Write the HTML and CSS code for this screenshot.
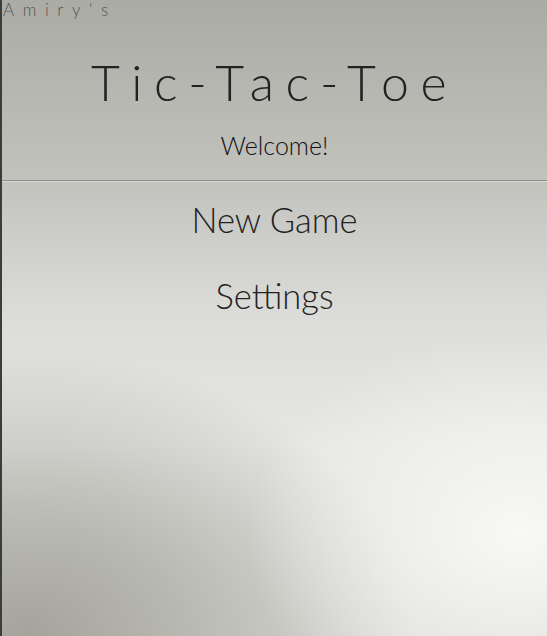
FILE: index.html
```html
<!DOCTYPE html>
<html>
<head>
<meta charset="utf-8">
<link rel="stylesheet" href="styles.css">
</head>
<body>
<div class="page">
  <header class="header">
    <div class="brand">Amiry's</div>
    <h1 class="title">Tic-Tac-Toe</h1>
    <p class="welcome">Welcome!</p>
  </header>
  <nav class="menu">
    <a class="menu-item">New Game</a>
    <a class="menu-item">Settings</a>
  </nav>
</div>
</body>
</html>
```
FILE: styles.css
```css
html, body {
  margin: 0;
  padding: 0;
  height: 100%;
}
body {
  font-family: Lato, "Open Sans", sans-serif;
  color: #222;
  background-color: #d8d8d4;
  background-image:
    radial-gradient(ellipse 50% 32% at 95% 84%, rgba(248,248,247,1) 0%, rgba(248,248,247,0) 100%),
    radial-gradient(ellipse 70% 45% at 5% 100%, rgba(164,164,156,1) 0%, rgba(164,164,156,0.65) 40%, rgba(164,164,156,0) 100%),
    linear-gradient(180deg, #ababa6 0%, #c2c2bd 28%, #dcdcda 50%, #e6e6e4 70%, #dcdcd8 100%);
  border-left: 2px solid #3c3c3c;
  box-sizing: border-box;
  overflow: hidden;
}
.page {
  display: flex;
  flex-direction: column;
  height: 100%;
}
.header {
  height: 180px;
  border-bottom: 1px solid #8e8e8a;
  box-shadow: 0 1px 0 #d8d8d6;
  display: flex;
  flex-direction: column;
  align-items: center;
}
.brand {
  align-self: flex-start;
  font-size: 17px;
  line-height: 20px;
  letter-spacing: 8.6px;
  color: #555;
  font-weight: 300;
  padding-left: 1px;
}
.title {
  margin: 32px 0 0 0;
  font-size: 50px;
  line-height: 60px;
  font-weight: 300;
  letter-spacing: 11.5px;
  color: #222;
}
.welcome {
  margin: 18px 0 0 0;
  font-size: 25px;
  line-height: 30px;
  font-weight: 300;
  color: #111;
}
.menu {
  display: flex;
  flex-direction: column;
  align-items: center;
  padding-top: 19px;
  gap: 36px;
}
.menu-item {
  font-size: 34.5px;
  line-height: 40px;
  font-weight: 300;
  color: #222;
}
```
